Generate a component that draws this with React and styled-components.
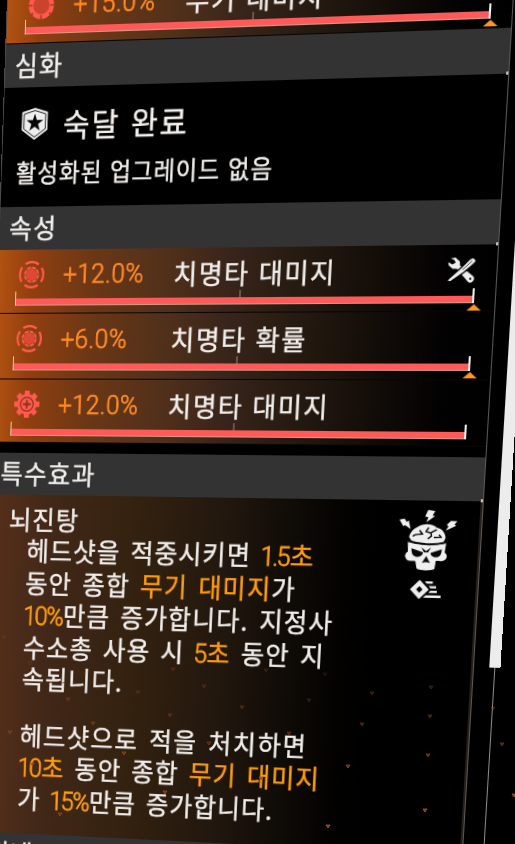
import React from "react"
import styled, { createGlobalStyle } from "styled-components"

const PANEL_WIDTH = 508
const PANEL_HEIGHT = 880

// Where the corners of the flat panel land on the tilted screen plane
const CORNERS = [[7.6, -20], [516.1, -40.3], [461, 885.6], [-23.2, 860]]

const tilt = ([[x0, y0], [x1, y1], [x2, y2], [x3, y3]], width, height) => {
  const sx = x0 - x1 + x2 - x3
  const sy = y0 - y1 + y2 - y3
  const det = (x1 - x2) * (y3 - y2) - (x3 - x2) * (y1 - y2)
  const g = (sx * (y3 - y2) - (x3 - x2) * sy) / det
  const h = ((x1 - x2) * sy - sx * (y1 - y2)) / det
  const values = [
    (x1 - x0 + g * x1) / width, (y1 - y0 + g * y1) / width, 0, g / width,
    (x3 - x0 + h * x3) / height, (y3 - y0 + h * y3) / height, 0, h / height,
    0, 0, 1, 0,
    x0, y0, 0, 1
  ]
  return `matrix3d(${ values.map(v => v.toFixed(9)).join(", ") })`
}

const GlobalStyle = createGlobalStyle`
  html, body {
    margin: 0;
    height: 844px;
    overflow: hidden;
    background: #000;
  }
`

const Screen = styled.main`
  position: relative;
  width: 515px;
  height: 844px;
  overflow: hidden;
  background: #000;
  color: #f1eeec;
  font-family: "Noto Sans CJK KR", sans-serif;
  -webkit-text-stroke-width: 0.4px;
`

const Tilted = styled.div`
  display: flex;
  gap: 15px;
  width: 560px;
  height: ${ PANEL_HEIGHT + 20 }px;
  transform-origin: 0 0;
  transform: ${ tilt(CORNERS, PANEL_WIDTH, PANEL_HEIGHT) };
`

const Panel = styled.section`
  box-sizing: border-box;
  width: ${ PANEL_WIDTH }px;
  flex: none;
  border-left: 1px solid #4a4a4a;
  border-right: 1px solid #5c5a59;
`

const SectionHeader = styled.h2`
  display: flex;
  align-items: center;
  justify-content: space-between;
  box-sizing: border-box;
  height: 42px;
  margin: 0;
  padding: 0 0 2px 10px;
  background: #333;
  font-size: 26px;
  font-weight: 400;
  line-height: 1;
  letter-spacing: 1.5px;
`

const Notch = styled.i`
  align-self: flex-end;
  width: 2px;
  height: 3px;
  margin-bottom: -3px;
  background: #c9c9c9;
`

const Mastery = styled.div`
  display: flex;
  flex-direction: column;
  box-sizing: border-box;
  height: 116px;
  padding: 16px 0 0 15px;
  background: #000;
`

const MasteryTitle = styled.div`
  display: flex;
  align-items: center;
  gap: 16px;
  height: 38px;
  padding-left: 4px;
  font-size: 30px;
  line-height: 38px;
  letter-spacing: 2.2px;
  word-spacing: 2px;
`

const MasteryNote = styled.p`
  margin: 12px 0 0;
  font-size: 23.5px;
  line-height: 32px;
  letter-spacing: 1.1px;
  word-spacing: 1.4px;
`

const Stat = styled.div`
  display: flex;
  flex-direction: column;
  box-sizing: border-box;
  height: ${ p => p.$height }px;
  padding: ${ p => p.$top || 7 }px 20px 0 19px;
  border-bottom: 1px solid #0a0502;
  background: linear-gradient(90deg, #b35212 0%, #913f0f 7%, #6a3716 20%, #50301a 35%, #38241a 48%, #251a10 62%, #120c08 78%, #030202 90%, #000 100%);
`

const StatLine = styled.div`
  display: flex;
  align-items: center;
  height: ${ p => p.$height || 34 }px;
`

const StatIcon = styled.span`
  display: flex;
  width: 50px;
  padding-left: 2px;
  box-sizing: border-box;
`

const Amount = styled.span`
  width: 115px;
  color: #ff8a24;
  font-family: Roboto, sans-serif;
  font-size: 25.5px;
  font-weight: 300;
  letter-spacing: 0.4px;
  -webkit-text-stroke-width: 0.7px;
`

const StatName = styled.span`
  flex: 1;
  font-size: 26.5px;
  line-height: 34px;
  letter-spacing: 1.5px;
  word-spacing: 2px;
  white-space: nowrap;
`

const Track = styled.div`
  position: relative;
  display: flex;
  align-items: flex-end;
  justify-content: space-between;
  height: 14px;
  box-sizing: border-box;
  border-left: 1px solid #f3d3bd;
  border-right: 2px solid #f5efeb;
`

const Fill = styled.div`
  flex: 1;
  height: 6px;
  background: #ff5a5a;
  border-bottom: 1px solid #d49a86;
`

const Middle = styled.i`
  position: absolute;
  left: 50%;
  top: 0;
  width: 2px;
  height: 7px;
  background: #6b5549;
`

const Pointer = styled.i`
  position: absolute;
  right: -9px;
  top: 15px;
  border: 7.5px solid transparent;
  border-top: 0;
  border-bottom: 6px solid #ff9427;
`

const Spacer = styled.div`
  height: 10px;
  background: #000;
`

const Effect = styled.div`
  display: flex;
  box-sizing: border-box;
  height: 345px;
  padding: 8px 0 0 22px;
  border-right: 2px solid #2a1e18;
  background: linear-gradient(90deg, #57301a 0%, #402718 14%, #33210f 32%, #21170e 50%, #110c07 62%, #030201 74%, #000 80%);
`

const EffectText = styled.div`
  flex: none;
  width: 403px;
  font-size: 26px;
  letter-spacing: 1.1px;
  word-spacing: 3.8px;
`

const EffectName = styled.h3`
  height: 31px;
  margin: 0 0 0 -1px;
  font-size: 26px;
  font-weight: 400;
  line-height: 32px;
`

const Paragraph = styled.p`
  margin: 0 0 25px 19px;
`

const Line = styled.span`
  display: block;
  height: 32.5px;
  line-height: 32.5px;
  white-space: nowrap;
  letter-spacing: ${ p => p.$track || 1.1 }px;
`

const Mark = styled.em`
  color: #ff9d0a;
  font-style: normal;
`

const Digits = styled.em`
  color: #ff9d0a;
  font-family: Roboto, sans-serif;
  font-size: 25.5px;
  font-style: normal;
  font-weight: 300;
  line-height: 1;
  letter-spacing: -1.8px;
  margin: 0 1px 0 -1px;
  -webkit-text-stroke-width: 0.8px;
`

const EffectIcons = styled.div`
  display: flex;
  flex-direction: column;
  align-items: center;
  gap: 9px;
  width: 58px;
  padding-top: 1px;
`

const Scroll = styled.div`
  display: flex;
  flex-direction: column;
  align-items: center;
  width: 11px;
`

const Thumb = styled.div`
  width: 100%;
  height: 665px;
  flex: none;
  background: #ececec;
`

const Rail = styled.div`
  width: 1px;
  flex: 1;
  background: #8d8d8d;
`

const Sparks = styled.svg`
  position: absolute;
  inset: 0;
  pointer-events: none;
`

const Shield = () => (
  <svg width="28" height="31" viewBox="0 0 28 31">
    <path d="M14 0 27.5 4V21.5L14 31 .5 21.5V4Z" fill="#eee" />
    <path d="M14 2.6 25.3 6V20.3L14 28.3 2.7 20.3V6Z" fill="none" stroke="#111" strokeWidth=".9" />
    <path d="m14 5.5 2.1 6.2h6.7l-5.3 4 2 6.3-5.5-3.8L8.5 22l2-6.3-5.3-4h6.7Z" fill="#080808" />
  </svg>
)

const Target = () => (
  <svg width="29" height="27" viewBox="-14 -13 28 26" fill="none" stroke="#ff5a50">
    <circle r="12" strokeWidth="2.2" strokeDasharray="14.4 4.45" strokeDashoffset="7.2" />
    <circle r="5.6" fill="#dc4a36" stroke="none" />
    <circle r="6.8" strokeWidth="1.8" strokeDasharray="4.3 1.04" />
  </svg>
)

const Gear = () => (
  <svg width="29" height="27" viewBox="-14 -13 28 26">
    <g fill="#ff5a50">
      { [0, 45, 90, 135].map(angle =>
        <rect key={ angle } x="-2.6" y="-13" width="5.2" height="26" rx=".6" transform={ `rotate(${ angle })` } />
      ) }
      <circle r="10" />
    </g>
    <g fill="none" stroke="#8a3018">
      <circle r="6.6" strokeWidth="1.2" />
      <path d="M0-4V4M-4 0H4" strokeWidth="1.8" />
    </g>
  </svg>
)

const Socket = () => (
  <svg width="29" height="27" viewBox="-14 -13 28 26">
    <circle r="10.5" fill="#c8442c" stroke="#ff5a50" strokeWidth="4.5" />
    <path d="M0 9V13M-13 0h4M9 0h4M-10 9l2-2M10 9 8 7" stroke="#9c4313" strokeWidth="1.6" />
  </svg>
)

const Tools = () => (
  <svg width="28" height="24" viewBox="0 0 28 24">
    <path d="M3 .8 7.6.1 12 3.7l.3 3.7L25.5 17.5a3.4 3.4 0 1 1-5 5L9.3 10.5 5.2 10.4 1.3 7.3.8 4.2 4.8 6.6 8 4.8 6.6 2.2Z" fill="#eee" />
    <circle cx="23" cy="20" r="1.1" fill="#000" />
    <path d="M0 23 2.2 19.5 13 10 21.5 1.5 25 0 28 2.8 26.2 6.3 16.5 14 4.5 22.3Z" fill="#eee" stroke="#000" strokeWidth="1.3" />
    <path d="m15 11.5 9-8.3M17 13.2l9-8.3" stroke="#222" strokeWidth=".8" />
  </svg>
)

const Skull = () => (
  <svg width="58" height="59" viewBox="0 0 58 61" preserveAspectRatio="none">
    <g fill="#efefef">
      <path d="m28 0 7 1-2.5 4.6 2.7.3L26.6 12.5l1.9-5.3-3.3-.4Z" />
      <path d="m0 10 5-1 2.4 3.3 1.8-1.6L11.5 19.5 5.8 15.4 4.2 16.9Z" />
      <path d="m51 10.5 6.3.3-2.8 3.5 2 .9L46.3 20.5l2.5-4.6-1.8-1.3Z" />
      <path d="M10.5 27.5c0-3.5 3-8 8-10.5 5-3.8 13.5-3.8 19 .5 5.5 1 9 6 9 10.5l-2 4.5c-8 2.5-20 2.5-31-.8Z" />
      <path d="M9.5 31.500c12 4 27 4.300 38 1.200l-1 9.800c3.500 1.500 2.500 6.500 0 7.500-2 1.300-5.500.7-8.300.7l-.9 8C34.500 61 23 61 19.500 58.700L18 51.500c-2.500-.8-6.500.7-8.800-1.600-2.700-2.800-2-6.500.8-8Z" />
    </g>
    <path d="m13.500 38.500 11.500 4c.5 4.500-7.500 6-10 2.500-1-1.500-1.500-4-1.500-6.500Zm30 .5L32.500 43c0 4 7 5.700 9.600 2.300 1-1.500 1.400-3.800 1.400-6.300ZM28.500 46l4 7-3-.7h-2l-3 .7Zm-5.300-8.500L28 41l5-3.500-3 5h-4Z" fill="#080808" />
    <path d="M9 31c12 4 27 4.300 38 1.200" fill="none" stroke="#080808" strokeWidth="2" />
    <path d="M14 26.500c3-3 5.500-1.500 9.500-2.500l-3-3.500M29.500 17.500l-2.500 4 5 1.500.5 3-3.500 3M32 22.500l5.500-3M35 27.500l7-.5-2-2.500" fill="none" stroke="#111" strokeWidth="1.500" />
  </svg>
)

const Dash = () => (
  <svg width="31" height="18" viewBox="0 0 31 18">
    <path d="M9.500 2.700 15.800 9 9.500 15.300 3.200 9Z" fill="none" stroke="#eee" strokeWidth="4.400" />
    <path d="M14.500 1h8v2.200h-6ZM18.500 5.500h7.500v2.200h-5.500ZM20.500 10h6.500v2.200h-8.500ZM16 14.600H31V17H13.500Z" fill="#eee" />
  </svg>
)

const STATS = [
  { icon: Target, amount: "+12.0%", name: "치명타 대미지", height: 63, pointer: true, tool: true },
  { icon: Target, amount: "+6.0%", name: "치명타 확률", height: 65, line: 35, pointer: true },
  { icon: Gear, amount: "+12.0%", name: "치명타 대미지", height: 63, line: 35 }
]

// x, y, opacity of the embers drifting over the panel
const SPARKS = [
  [431, 687, 0.4], [372, 693, 0.4], [309, 700, 0.3], [325, 674, 0.2], [430, 716, 0.5], [362, 724, 0.5],
  [493, 708, 0.5], [502, 744, 0.6], [428, 755, 0.7], [348, 766, 0.8], [514, 795, 1], [425, 810, 1],
  [328, 826, 1], [266, 670, 0.25], [204, 686, 0.3], [138, 692, 0.3], [173, 669, 0.3], [68, 699, 0.4],
  [242, 707, 0.4], [170, 715, 0.4], [93, 723, 0.5], [10, 732, 0.5], [289, 733, 0.5], [209, 743, 0.5],
  [124, 753, 0.7], [32, 764, 0.7], [261, 778, 0.8], [165, 792, 0.8], [60, 814, 0.7], [30, 663, 0.2], [4, 637, 0.2]
]

const StatRow = ({ icon: Icon, amount, name, height, line, top, pointer, tool }) => (
  <Stat $height={ height } $top={ top }>
    <StatLine $height={ line }>
      <StatIcon><Icon /></StatIcon>
      <Amount>{ amount }</Amount>
      <StatName>{ name }</StatName>
      { tool && <Tools /> }
    </StatLine>
    <Track>
      <Fill />
      <Middle />
      { pointer && <Pointer /> }
    </Track>
  </Stat>
)

const App = () => (
  <Screen>
    <GlobalStyle />
    <Tilted>
      <Panel>
        <StatRow icon={ Socket } amount="+15.0%" name="무기 대미지" height={ 62.4 } line={ 28 } top={ 11 } pointer />
        <SectionHeader>심화<Notch /></SectionHeader>
        <Mastery>
          <MasteryTitle><Shield />숙달 완료</MasteryTitle>
          <MasteryNote>활성화된 업그레이드 없음</MasteryNote>
        </Mastery>
        <SectionHeader>속성<Notch /></SectionHeader>
        { STATS.map((stat, i) => <StatRow key={ i } { ...stat } />) }
        <Spacer />
        <SectionHeader>특수효과<Notch /></SectionHeader>
        <Effect>
          <EffectText>
            <EffectName>뇌진탕</EffectName>
            <Paragraph>
              <Line>헤드샷을 적중시키면 <Digits>1.5</Digits><Mark>초</Mark></Line>
              <Line $track={ 1.2 }>동안 종합 <Mark>무기 대미지</Mark>가</Line>
              <Line $track={ 1.2 }><Digits>10%</Digits>만큼 증가합니다. 지정사</Line>
              <Line>수소총 사용 시 <Digits>5</Digits><Mark>초</Mark> 동안 지</Line>
              <Line>속됩니다.</Line>
            </Paragraph>
            <Paragraph>
              <Line $track={ 1.6 }>헤드샷으로 적을 처치하면</Line>
              <Line><Digits>10</Digits><Mark>초</Mark> 동안 종합 <Mark>무기 대미지</Mark></Line>
              <Line>가 <Digits>15%</Digits>만큼 증가합니다.</Line>
            </Paragraph>
          </EffectText>
          <EffectIcons>
            <Skull />
            <Dash />
          </EffectIcons>
        </Effect>
        <SectionHeader>변배</SectionHeader>
      </Panel>
      <Scroll>
        <Thumb />
        <Rail />
      </Scroll>
    </Tilted>
    <Sparks width="515" height="844">
      { SPARKS.map(([x, y, opacity], i) =>
        <path key={ i } d={ `M${ x - 2 } ${ y - 1 }h4l-2 3Z` } fill="#6b3216" stroke="#c8642c" strokeWidth=".7" opacity={ opacity } />
      ) }
    </Sparks>
  </Screen>
)

export default App
